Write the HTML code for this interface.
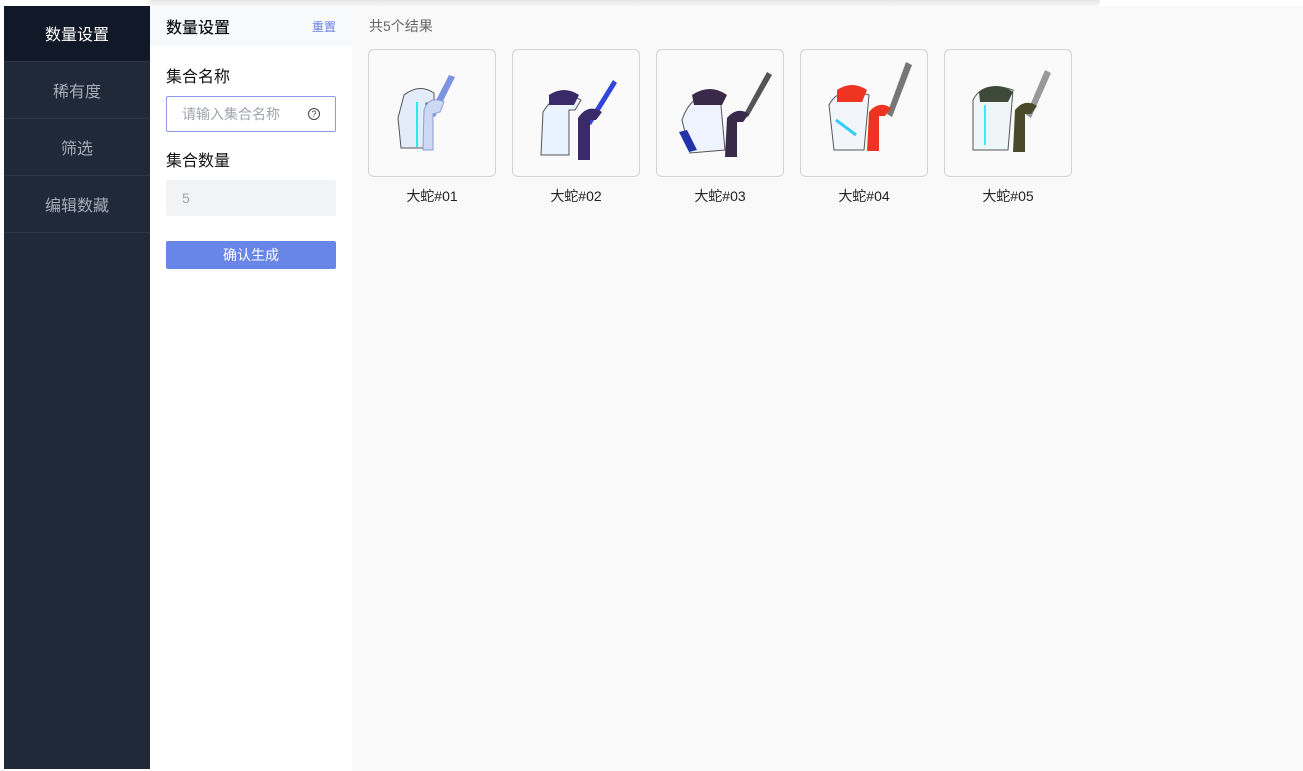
<!DOCTYPE html>
<html><head><meta charset="utf-8"><style>
*{margin:0;padding:0;box-sizing:border-box}
body{width:1303px;height:771px;background:#fff;font-family:"Liberation Sans","Noto Sans CJK SC",sans-serif;position:relative;overflow:hidden}
.shadow{position:absolute;left:150px;top:0;width:950px;height:8px;background:linear-gradient(#e6e6e6,#fafafa);border-radius:0 0 40px 40px}
.side{position:absolute;left:4px;top:6px;width:146px;height:763px;background:#1f2937}
.side div{height:57px;border-bottom:1px solid #2d3748;color:#a5acb8;font-size:16px;text-align:center;line-height:62px}
.side div.act{background:#111827;color:#fff;height:56px;line-height:60px}
.panel{position:absolute;left:150px;top:6px;width:202px;height:763px;background:#fff}
.ph{height:40px;background:#f8f9fb;padding:0 16px;display:flex;justify-content:space-between;align-items:center}
.ph b{font-size:16px;font-weight:500;color:#111}
.ph span{font-size:12px;color:#6b7fe0}
.lbl{position:absolute;left:16px;font-size:16px;color:#111}
.inp{position:absolute;left:16px;width:170px;height:36px;border:1px solid #8e9bec;border-radius:2px;font-size:14px;color:#a0a4ad;line-height:34px;padding-left:15px}
.inp i{position:absolute;right:15px;top:11px;width:12px;height:12px;border:1.3px solid #444;border-radius:50%;font-style:normal;font-size:9px;color:#444;line-height:10px;text-align:center}
.num{position:absolute;left:16px;top:174px;width:170px;height:36px;background:#f2f3f5;border-radius:2px;font-size:14px;color:#a0a4ad;line-height:36px;padding-left:16px}
.btn{position:absolute;left:16px;top:235px;width:170px;height:28px;background:#6886e8;color:#fff;font-size:14px;text-align:center;line-height:28px;border-radius:2px}
.main{position:absolute;left:352px;top:6px;width:951px;height:765px;background:#f9f9f9}
.cnt{position:absolute;left:17px;top:10px;font-size:14px;color:#666}
.card{position:absolute;top:43px;width:128px;height:128px;border:1px solid #d4d4d4;border-radius:6px;background:#fafafa}
.cap{position:absolute;top:180px;width:128px;text-align:center;font-size:14px;color:#222}
</style></head><body>
<div class="shadow"></div>
<div class="side"><div class="act">数量设置</div><div>稀有度</div><div>筛选</div><div>编辑数藏</div></div>
<div class="panel">
<div class="ph"><b>数量设置</b><span>重置</span></div>
<div class="lbl" style="top:57px">集合名称</div>
<div class="inp" style="top:90px">请输入集合名称<i>?</i></div>
<div class="lbl" style="top:141px">集合数量</div>
<div class="num">5</div>
<div class="btn">确认生成</div>
</div>
<div class="main">
<div class="cnt">共5个结果</div>
<div class="card" style="left:16px"><svg width="128" height="128"><path d="M80 25l6 2-20 40-6-3z" fill="#7b93e0"/><path d="M35 45q15-12 30-2l0 10-8 0 0 45-25 0-3-30z" fill="#e4ecfa" stroke="#555" stroke-width="1"/><path d="M55 60q5-15 20-8l-4 10-7 2 0 36-10 0z" fill="#cdd8f5" stroke="#8a9ed8"/><path d="M48 52l0 45" stroke="#2ee" stroke-width="2"/></svg></div>
<div class="card" style="left:160px"><svg width="128" height="128"><path d="M100 30l4 3-26 42-4-3z" fill="#3344dd"/><path d="M30 62q15-25 38-12l-6 10-6 0 0 45-28 0z" fill="#e8f3ff" stroke="#555"/><path d="M36 45q15-10 30 0l-5 10-25 0z" fill="#3a2a6a"/><path d="M65 68q10-15 24-6l-6 8-6 0 0 40-12 0z" fill="#3a2a6a"/></svg></div>
<div class="card" style="left:304px"><svg width="128" height="128"><path d="M110 22l5 3-24 42-4-3z" fill="#555"/><path d="M25 70q10-30 38-25l5 55-35 3z" fill="#eef3ff" stroke="#555"/><path d="M35 45q18-12 35 0l-5 10-28 0z" fill="#3a2a4a"/><path d="M22 82l10 20 8-2-10-20z" fill="#2233aa"/><path d="M70 68q10-12 22-4l-6 8-6 0 0 35-12 0z" fill="#3a2a4a"/></svg></div>
<div class="card" style="left:448px"><svg width="128" height="128"><path d="M105 12l6 3-20 52-5-3z" fill="#777"/><path d="M28 55q10-20 40-10l-5 55-30 0z" fill="#f2f6fb" stroke="#555"/><path d="M36 40q15-10 30 0l-5 12-25 0z" fill="#e32"/><path d="M68 62q10-12 22-4l-6 8-6 0 0 35-12 0z" fill="#e32"/><path d="M35 70l20 15" stroke="#3cf" stroke-width="3"/></svg></div>
<div class="card" style="left:592px"><svg width="128" height="128"><path d="M100 20l6 3-20 45-5-3z" fill="#999"/><path d="M28 50q10-20 40-10l-5 60-35 0z" fill="#eef6f8" stroke="#555"/><path d="M34 42q18-12 34 0l-5 10-28 0z" fill="#3d4a3a"/><path d="M70 60q10-12 22-4l-6 8-6 0 0 38-12 0z" fill="#4a4a2a"/><path d="M40 55l0 40" stroke="#3ef" stroke-width="2"/></svg></div>
<div class="cap" style="left:16px">大蛇#01</div>
<div class="cap" style="left:160px">大蛇#02</div>
<div class="cap" style="left:304px">大蛇#03</div>
<div class="cap" style="left:448px">大蛇#04</div>
<div class="cap" style="left:592px">大蛇#05</div>
</div>
</body></html>
